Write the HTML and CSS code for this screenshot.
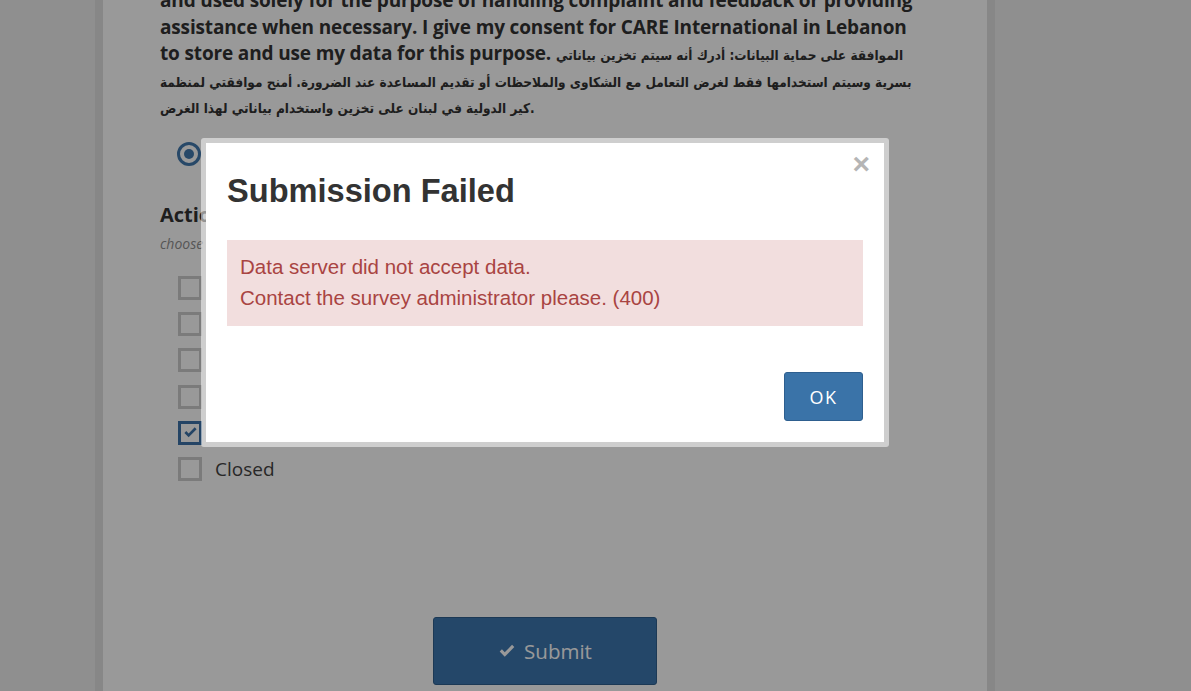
FILE: index.html
```html
<!DOCTYPE html>
<html lang="en">
<head>
<meta charset="utf-8">
<title>Survey</title>
<link rel="stylesheet" href="styles.css">
</head>
<body>
<div class="page">
  <main class="card">
    <p class="consent">and used solely for the purpose of handling complaint and feedback or providing<br>assistance when necessary. I give my consent for CARE International in Lebanon<br>to store and use my data for this purpose. <span class="ar">الموافقة على حماية البيانات: أدرك أنه سيتم تخزين بياناتي<br>بسرية وسيتم استخدامها فقط لغرض التعامل مع الشكاوى والملاحظات أو تقديم المساعدة عند الضرورة. أمنح موافقتي لمنظمة<br>كير الدولية في لبنان على تخزين واستخدام بياناتي لهذا الغرض.</span></p>
    <div class="radio-row">
      <span class="radio"><span class="radio-dot"></span></span>
      <span class="opt-label">Yes</span>
    </div>
    <h2 class="q-title">Action taken</h2>
    <p class="hint">choose all that apply</p>
    <ul class="checks">
      <li class="check-row"><span class="box"></span><span class="opt-label">Referred</span></li>
      <li class="check-row"><span class="box"></span><span class="opt-label">Followed up</span></li>
      <li class="check-row"><span class="box"></span><span class="opt-label">Resolved</span></li>
      <li class="check-row"><span class="box"></span><span class="opt-label">Pending</span></li>
      <li class="check-row"><span class="box checked"><svg viewBox="0 0 16 16" width="15" height="15"><path d="M1.5 8.5 L6 13 L14.5 4.5 L12.5 2.5 L6 9 L3.5 6.5 Z" fill="#3c72a8"/></svg></span><span class="opt-label">Handled</span></li>
      <li class="check-row"><span class="box"></span><span class="opt-label">Closed</span></li>
    </ul>
    <div class="submit-wrap">
      <button class="submit"><svg class="submit-icon" viewBox="0 0 16 16" width="18" height="18"><path d="M1.5 8.5 L6 13 L14.5 4.5 L12.5 2.5 L6 9 L3.5 6.5 Z" fill="#ffffff"/></svg>Submit</button>
    </div>
  </main>
</div>
<div class="overlay"></div>
<div class="modal">
  <div class="modal-inner">
    <span class="close">×</span>
    <h1 class="modal-title">Submission Failed</h1>
    <div class="alert">
      <div>Data server did not accept data.</div>
      <div>Contact the survey administrator please. (400)</div>
    </div>
    <div class="modal-footer">
      <button class="ok">OK</button>
    </div>
  </div>
</div>
</body>
</html>
```
FILE: styles.css
```css
* { box-sizing: border-box; }
html, body { margin: 0; padding: 0; }
body {
  background: #eeeeee;
  font-family: "Open Sans", "DejaVu Sans", sans-serif;
  color: #333;
  height: 691px;
  overflow: hidden;
}
.page {
  display: flow-root;
  margin-left: 95px;
  width: 900px;
  height: 691px;
  border-left: 8px solid #e1e1e1;
  border-right: 8px solid #e1e1e1;
  background: #fff;
}
.card {
  padding: 0 57px;
}
.consent {
  margin: -13px 0 0 0;
  font-size: 19px;
  letter-spacing: -0.15px;
  font-weight: 700;
  line-height: 26.6px;
  white-space: nowrap;
  color: #333;
}
.ar {
  font-family: "DejaVu Sans Condensed", "DejaVu Sans", sans-serif;
  font-stretch: condensed;
  font-size: 13.5px;
  letter-spacing: 0;
  font-weight: 700;
  line-height: 14px;
}
.radio-row {
  display: flex;
  align-items: center;
  gap: 14px;
  margin: 22px 0 0 17px;
  height: 24px;
}
.radio {
  width: 24px;
  height: 24px;
  border: 3px solid #4279ae;
  border-radius: 50%;
  display: flex;
  align-items: center;
  justify-content: center;
}
.radio-dot {
  width: 10px;
  height: 10px;
  border-radius: 50%;
  background: #4279ae;
}
.opt-label {
  font-size: 19px;
  color: #444;
}
.q-title {
  margin: 35px 0 0 0;
  font-size: 20px;
  font-weight: 700;
  line-height: 28px;
  color: #333;
}
.hint {
  margin: 5px 0 0 0;
  font-size: 14px;
  font-style: italic;
  line-height: 20px;
  color: #8f8f8f;
}
.checks {
  list-style: none;
  margin: 22px 0 0 18px;
  padding: 0;
  display: flex;
  flex-direction: column;
  gap: 12.2px;
}
.check-row {
  display: flex;
  align-items: center;
  gap: 13px;
  height: 24px;
}
.box {
  width: 24px;
  height: 24px;
  border: 3px solid #cdcdcd;
  display: flex;
  align-items: center;
  justify-content: center;
}
.box.checked { border-color: #3c72a8; }
.submit-wrap {
  display: flex;
  justify-content: center;
  margin-top: 136px;
}
.submit {
  width: 224px;
  height: 68px;
  background: #3d77b0;
  border: 1px solid #2f5f8e;
  border-radius: 3px;
  color: #fff;
  font-family: "Open Sans", sans-serif;
  font-size: 20.5px;
  display: flex;
  align-items: center;
  justify-content: center;
  gap: 8px;
}
.overlay {
  position: fixed;
  inset: 0;
  background: rgba(0, 0, 0, 0.4);
}
.modal {
  position: fixed;
  left: 201px;
  top: 138px;
  width: 688px;
  height: 309px;
  border: 5px solid rgba(255, 255, 255, 0.52);
  border-radius: 3px;
  background-clip: padding-box;
}
.modal-inner {
  position: relative;
  background: #fff;
  height: 100%;
  padding: 28px 21px 0 21px;
}
.close {
  position: absolute;
  right: 14px;
  top: 6px;
  font-family: "Liberation Sans", Arial, sans-serif;
  font-size: 30px;
  font-weight: 700;
  color: #b5b5b5;
  line-height: 30px;
}
.modal-title {
  margin: 0;
  font-family: "Liberation Sans", Arial, sans-serif;
  font-size: 32.6px;
  font-weight: 700;
  line-height: 40px;
  color: #333;
}
.alert {
  margin-top: 29px;
  background: #f2dede;
  color: #a94442;
  font-family: "Liberation Sans", Arial, sans-serif;
  font-size: 20.5px;
  line-height: 31px;
  padding: 11px 13px 13px 13px;
}
.modal-footer {
  display: flex;
  justify-content: flex-end;
  margin-top: 46px;
}
.ok {
  width: 79px;
  height: 49px;
  background: #3a73a8;
  border: 1px solid #2e5f8f;
  border-radius: 3px;
  color: #fff;
  font-family: "Open Sans", sans-serif;
  font-size: 18px;
  letter-spacing: 1.5px;
}
```
